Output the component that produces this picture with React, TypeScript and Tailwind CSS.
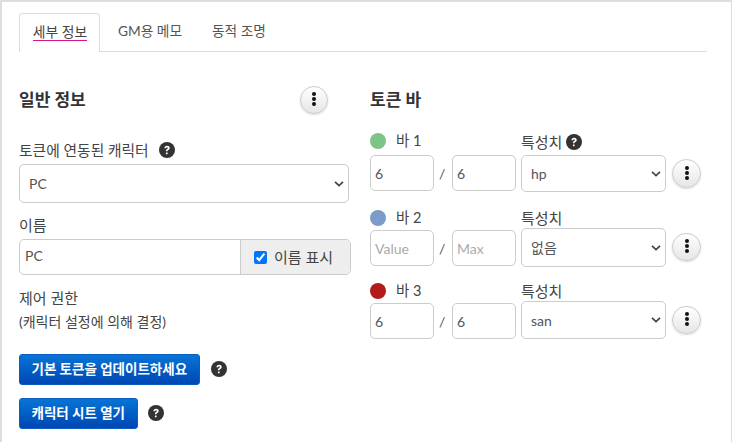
import React from "react";

const font = { fontFamily: '"Lato","Noto Sans CJK KR",sans-serif' };

function Help({ className = "" }: { className?: string }) {
  return (
    <svg viewBox="0 0 16 16" className={`w-4 h-4 shrink-0 ${className}`}>
      <circle cx="8" cy="8" r="8" fill="#333333" />
      <path d="M5.4 6.2c0-1.5 1.1-2.5 2.7-2.5 1.5 0 2.6.9 2.6 2.2 0 1-.5 1.5-1.3 2-.7.5-.9.7-.9 1.4H6.9c0-1.1.3-1.6 1.1-2.2.6-.4.9-.7.9-1.1 0-.5-.3-.8-.8-.8-.6 0-.9.4-1 1H5.4z" fill="#fff" />
      <rect x="6.9" y="10.4" width="1.7" height="1.8" rx=".3" fill="#fff" />
    </svg>
  );
}

function Dots({ className = "" }: { className?: string }) {
  return (
    <button className={`h-[28px] shrink-0 rounded-full border border-[#cccccc] bg-gradient-to-b from-white to-[#e6e6e6] shadow-[0_1px_2px_rgba(0,0,0,0.15)] flex flex-col items-center justify-center gap-[1px] pb-[2px] ${className}`}>
      <span className="w-[4px] h-[4px] rounded-full bg-[#111]" />
      <span className="w-[4px] h-[4px] rounded-full bg-[#111]" />
      <span className="w-[4px] h-[4px] rounded-full bg-[#111]" />
    </button>
  );
}

function Select({ value, className = "" }: { value: string; className?: string }) {
  return (
    <div className={`relative flex items-center border border-[#cccccc] rounded-[5px] bg-white text-[14px] text-[#555555] pl-[9px] ${className}`}>
      {value}
      <svg viewBox="0 0 12 8" className="absolute right-[4px] top-1/2 -translate-y-1/2 w-[10px] h-[7px]">
        <path d="M1.2 1.4 6 6l4.8-4.6" fill="none" stroke="#444" strokeWidth="2" />
      </svg>
    </div>
  );
}

function Field({ value, placeholder }: { value?: string; placeholder?: string }) {
  return (
    <div className={`w-[64px] h-[36px] border border-[#cccccc] rounded-[5px] bg-white flex items-center pl-[4px] text-[14px] ${value ? "text-[#555555]" : "text-[#aaaaaa]"}`}>
      {value ?? placeholder}
    </div>
  );
}

type BarProps = {
  color: string;
  name: string;
  v?: string;
  m?: string;
  attr: string;
  help?: boolean;
  mt: string;
  fieldMt: string;
  selectClass: string;
  dotMt: string;
  dotW: string;
};

function Bar({ color, name, v, m, attr, help, mt, fieldMt, selectClass, dotMt, dotW }: BarProps) {
  return (
    <div className={`grid grid-cols-[146px_144px_1fr] gap-x-[5px] items-start ${mt}`}>
      <div className="flex items-center gap-[10px] h-[16px] text-[14.5px] text-[#444444] leading-none">
        <span className={`w-[16px] h-[16px] rounded-full ${color}`} />
        {name}
      </div>
      <div className={`flex items-center gap-[4px] h-[16px] text-[15px] text-[#444444] leading-none ${help ? "translate-y-[1px]" : ""}`}>
        특성치
        {help && <Help />}
      </div>
      <div />
      <div className={`flex items-center ${fieldMt}`}>
        <Field value={v} placeholder="Value" />
        <span className="w-[18px] pl-[5px] text-[14px] text-[#555555]">/</span>
        <Field value={m} placeholder="Max" />
      </div>
      <Select value={attr} className={`w-[145px] ${selectClass}`} />
      <Dots className={`ml-[2px] ${dotMt} ${dotW}`} />
    </div>
  );
}

function BlueButton({ children }: { children: React.ReactNode }) {
  return (
    <button className="h-[31px] px-[11.5px] rounded-[3px] bg-gradient-to-b from-[#0a74d6] to-[#0047b3] text-white text-[13.5px] font-bold leading-none border border-[#0a5cc0]">
      {children}
    </button>
  );
}

export default function App() {
  return (
    <div style={font} className="w-[732px] h-[442px] overflow-hidden bg-white border-t-2 border-l-2 border-r border-[#dddddd] pl-[17px] pr-[24px] pt-[11px] text-[#444444]">
      <div className="flex h-[39px] border-b border-[#dddddd] text-[14px]">
        <div className="w-[81px] h-[39px] border border-b-0 border-[#dddddd] rounded-t-[4px] bg-white flex items-center justify-center pb-[2px] pl-[1px]">
          <span className="border-b-[1.5px] border-[#d6158c] leading-[17px] text-[13.8px] text-[#444444]">세부 정보</span>
        </div>
        <div className="pl-[18px] flex items-center text-[13.7px] text-[#555555] pb-[2px]">GM용 메모</div>
        <div className="pl-[30px] flex items-center text-[13.7px] text-[#555555] pb-[2px]">동적 조명</div>
      </div>

      <div className="flex gap-[21px] mt-[34px]">
        <div className="w-[330px]">
          <div className="flex items-center justify-between h-[28px] pr-[21px]">
            <h2 className="text-[17px] font-bold text-[#333333]">일반 정보</h2>
            <Dots className="w-[28px]" />
          </div>
          <div className="flex items-center gap-[10px] mt-[27px] h-[18px] text-[14.75px]">
            토큰에 연동된 캐릭터
            <Help />
          </div>
          <Select value="PC" className="h-[39px] mt-[5px]" />
          <div className="mt-[13px] h-[18px] text-[15px] flex items-center">이름</div>
          <div className="flex w-[332px] h-[36px] mt-[5px] border border-[#cccccc] rounded-[5px] overflow-hidden text-[14px]">
            <div className="flex-1 flex items-center pl-[5px] pb-[3px] text-[#555555]">PC</div>
            <div className="w-[110px] bg-[#eeeeee] border-l border-[#cccccc] flex items-center pl-[13px] gap-[7px] text-[15px]">
              <input type="checkbox" defaultChecked className="w-[13px] h-[13px] accent-[#0075ff]" />
              이름 표시
            </div>
          </div>
          <div className="mt-[14px] h-[18px] text-[15px] flex items-center">제어 권한</div>
          <div className="mt-[5px] h-[18px] text-[14px] flex items-center">(캐릭터 설정에 의해 결정)</div>
          <div className="flex items-center gap-[11px] mt-[24px]">
            <BlueButton>기본 토큰을 업데이트하세요</BlueButton>
            <Help className="-translate-y-[1px]" />
          </div>
          <div className="flex items-center gap-[10px] mt-[13px]">
            <BlueButton>캐릭터 시트 열기</BlueButton>
            <Help className="-translate-y-[1px]" />
          </div>
        </div>

        <div className="flex-1">
          <div className="flex items-center h-[28px]">
            <h2 className="text-[17px] font-bold text-[#333333]">토큰 바</h2>
          </div>
          <Bar mt="mt-[19px]" color="bg-[#7ec488]" name="바 1" v="6" m="6" attr="hp" help fieldMt="mt-[6px]" selectClass="h-[37px] mt-[6px]" dotMt="mt-[10px]" dotW="w-[29px] h-[29px]" />
          <Bar mt="mt-[18px]" color="bg-[#7b9cc8]" name="바 2" attr="없음" fieldMt="mt-[4px]" selectClass="h-[39px] mt-[2px]" dotMt="mt-[7px]" dotW="w-[29px]" />
          <Bar mt="mt-[16px]" color="bg-[#b31b1b]" name="바 3" v="6" m="6" attr="san" fieldMt="mt-[4px]" selectClass="h-[38px] mt-[2px]" dotMt="mt-[7px]" dotW="w-[29px]" />
        </div>
      </div>
    </div>
  );
}
